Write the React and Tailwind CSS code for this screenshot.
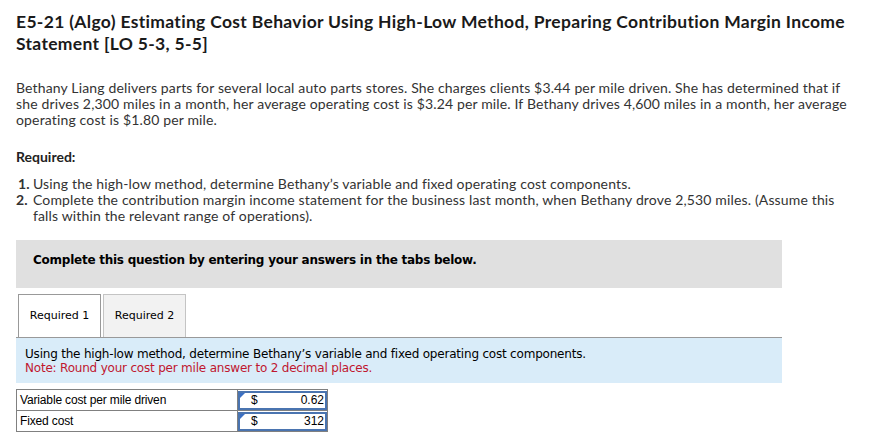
import React, { useState } from 'react';

const rows = [
    { label: 'Variable cost per mile driven', value: '0.62' },
    { label: 'Fixed cost', value: '312' },
];

const App = () => {
    const [activeTab, setActiveTab] = useState(1);

    return (
        <div className="w-[882px] h-[436px] overflow-hidden bg-white px-4 pt-[11px] text-[#222] font-['Lato','Open_Sans',sans-serif]">
            {/* Title */}
            <h1 className="text-[17.5px] font-bold leading-[22px] text-[#1a1a1a] tracking-[0.32px]">
                E5-21 (Algo) Estimating Cost Behavior Using High-Low Method, Preparing Contribution Margin Income Statement [LO 5-3, 5-5]
            </h1>

            {/* Problem text */}
            <p className="mt-[25px] text-[14px] leading-[16px] text-[#333] tracking-[0.15px] pr-[18px]">
                Bethany Liang delivers parts for several local auto parts stores. She charges clients $3.44 per mile driven. She has determined that if she drives 2,300 miles in a month, her average operating cost is $3.24 per mile. If Bethany drives 4,600 miles in a month, her average operating cost is $1.80 per mile.
            </p>

            <p className="mt-[21px] text-[14px] font-bold text-[#222] leading-[16px]">Required:</p>

            <ol className="mt-[11px] text-[14px] leading-[16px] text-[#333] tracking-[0.15px] pr-[18px]">
                <li className="flex">
                    <span className="w-[17px] shrink-0 pl-[2px] font-bold">1.</span>
                    <span>Using the high-low method, determine Bethany’s variable and fixed operating cost components.</span>
                </li>
                <li className="flex">
                    <span className="w-[17px] shrink-0 font-bold">2.</span>
                    <span>Complete the contribution margin income statement for the business last month, when Bethany drove 2,530 miles. (Assume this falls within the relevant range of operations).</span>
                </li>
            </ol>

            {/* Instruction box */}
            <div className="mt-[16px] w-[766px] h-[48px] bg-[#e0e0e0] pl-[17px] pt-[11px]">
                <p className="text-[12px] font-bold text-black font-['DejaVu_Sans','Verdana',sans-serif] tracking-[-0.25px]">
                    Complete this question by entering your answers in the tabs below.
                </p>
            </div>

            {/* Tabs */}
            <div className="mt-[6px] w-[766px] flex items-end gap-[2px] pl-[2px] border-b border-[#999] font-['DejaVu_Sans','Verdana',sans-serif]">
                {[1, 2].map((n) => (
                    <button
                        key={n}
                        onClick={() => setActiveTab(n)}
                        className={`h-[43px] w-[83px] text-[11px] text-black border border-b-0 ${activeTab === n ? 'bg-white border-[#999]' : 'bg-[#f2f2f2] border-[#c4c4c4]'}`}
                    >
                        Required {n}
                    </button>
                ))}
            </div>

            {/* Question panel */}
            <div className="w-[766px] h-[45px] bg-[#d9ecf9] pl-[9px] pt-[9px] font-['DejaVu_Sans','Verdana',sans-serif] text-[12px] leading-[14px] tracking-[-0.2px]">
                <p className="text-black">Using the high-low method, determine Bethany’s variable and fixed operating cost components.</p>
                <p className="text-[#c0172f]">Note: Round your cost per mile answer to 2 decimal places.</p>
            </div>

            {/* Answer table */}
            <table className="mt-[6px] border-collapse font-['Liberation_Sans','Arial',sans-serif] text-[12px] text-black">
                <tbody>
                    {rows.map((row) => (
                        <tr key={row.label} className="h-[21px]">
                            <td className="w-[221px] border border-[#808080] pl-[3px] leading-[18px] tracking-[-0.15px]">{row.label}</td>
                            <td className="w-[90px] p-0 border border-[#808080]">
                                <div className="relative h-[19px] border-2 border-[#4a74b0] flex items-center pl-[11px] pr-[1px] justify-between">
                                    <span className="absolute left-0 top-0 w-0 h-0 border-t-[5px] border-r-[5px] border-t-[#3a6fc4] border-r-transparent"></span>
                                    <span>$</span>
                                    <span>{row.value}</span>
                                </div>
                            </td>
                        </tr>
                    ))}
                </tbody>
            </table>
        </div>
    );
};

export default App;
